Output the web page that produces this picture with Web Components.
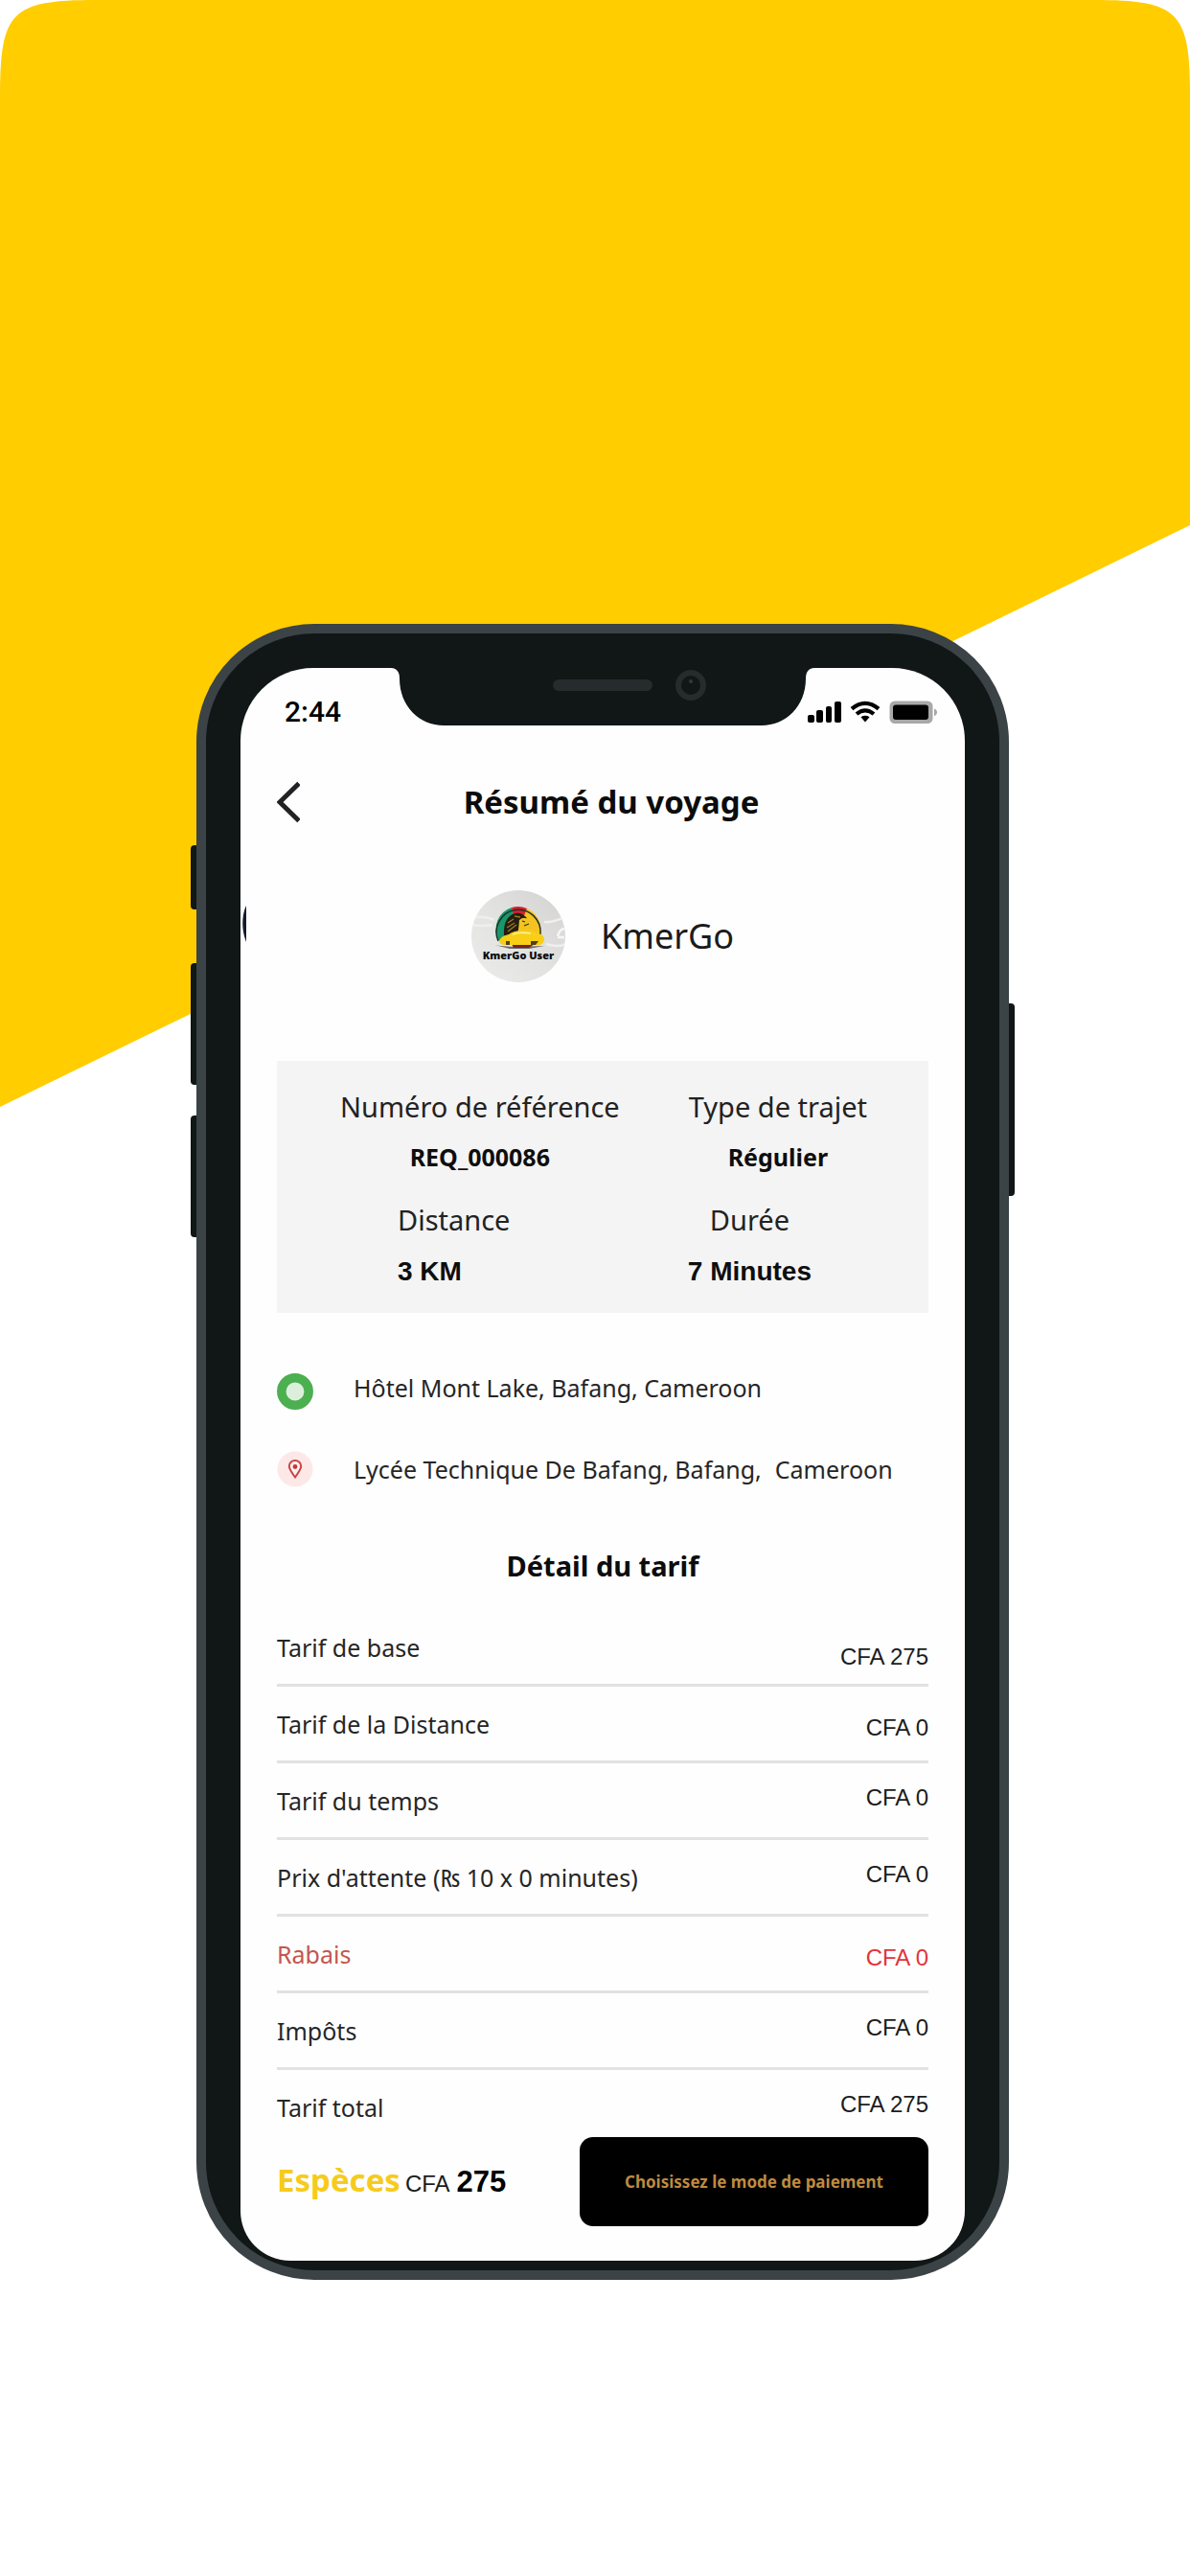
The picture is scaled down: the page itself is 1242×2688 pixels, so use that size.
<!DOCTYPE html>
<html lang="fr">
<head>
<meta charset="utf-8">
<meta name="viewport" content="width=device-width, initial-scale=1">
<title>KmerGo – Résumé du voyage</title>
<style>
  body { margin: 0; background: #fff; color: #161616; font-family: "Noto Sans", sans-serif; }
</style>
</head>
<body>
<promo-stage>
  <phone-frame>
    <status-bar>2:44</status-bar>
    <screen-header>Résumé du voyage</screen-header>
    <driver-profile>KmerGo</driver-profile>
    <trip-facts></trip-facts>
    <trip-route>
      <route-stop kind="start"><span>Hôtel Mont Lake, Bafang, Cameroon</span></route-stop>
      <route-stop kind="end"><span>Lycée Technique De Bafang, Bafang,</span> <span>Cameroon</span></route-stop>
    </trip-route>
    <fare-table>Détail du tarif</fare-table>
    <pay-bar></pay-bar>
  </phone-frame>
</promo-stage>

<script>
function define(name, markup, setup) {
  const template = document.createElement('template');
  template.innerHTML = markup;
  customElements.define(name, class extends HTMLElement {
    constructor() {
      super();
      this.attachShadow({ mode: 'open' }).append(template.content.cloneNode(true));
      if (setup) setup(this.shadowRoot);
    }
  });
}

/* Yellow backdrop with the phone stacked over it in one grid cell */
define('promo-stage', `
<style>
  :host { display: grid; overflow: hidden; }
  .backdrop { grid-area: 1 / 1; width: 100%; display: block; }
  .content { grid-area: 1 / 1; padding: 651px 0 309px 16px; display: flex; justify-content: center; }
</style>
<svg class="backdrop" viewBox="0 0 1242 1156" aria-hidden="true">
  <path fill="#ffcd00" d="M0 100C0 12 12 0 100 0H1142C1230 0 1242 12 1242 100V548L0 1155Z"/>
</svg>
<div class="content"><slot></slot></div>`);

define('phone-frame', `
<style>
  :host { display: block; position: relative; box-sizing: border-box; width: 100%; max-width: 848px;
    border: 10px solid #3b4346; border-radius: 123px; background: #111616; padding: 36px 36px 10px; }
  .screen { position: relative; display: flex; flex-direction: column; background: #fefefe;
    border-radius: 76px 76px 52px 52px; overflow: hidden; padding-bottom: 36px; }
  .key { position: absolute; width: 6px; background: #111616; }
  .left { left: -16px; border-radius: 4px 0 0 4px; }
  .right { right: -16px; border-radius: 0 4px 4px 0; }
  .mute { top: 221px; height: 67px; }
  .up { top: 344px; height: 127px; }
  .down { top: 503px; height: 127px; }
  .power { top: 386px; height: 201px; }
  .edge { position: absolute; left: 2px; top: 248px; }
</style>
<i class="key left mute"></i><i class="key left up"></i><i class="key left down"></i><i class="key right power"></i>
<div class="screen">
  <slot></slot>
  <svg class="edge" width="4" height="38" aria-hidden="true"><path d="M4 0C-1 10 -1 26 4 38Z" fill="#111b2c"/></svg>
</div>`);

define('status-bar', `
<style>
  :host { position: relative; display: flex; align-items: center; justify-content: space-between;
    height: 92px; padding: 0 28px 0 46px; font: 500 30px/36px Roboto, sans-serif; color: #000; }
  .notch { position: absolute; top: 0; left: 50%; margin-left: -221px; }
</style>
<slot></slot>
<svg class="notch" width="442" height="61" viewBox="0 0 442 61" aria-hidden="true">
  <path fill="#111616" d="M0 0H442C436 0 433 4 433 11C433 40 412 60 387 60H55C30 60 9 40 9 11C9 4 6 0 0 0Z"/>
  <rect x="169" y="12" width="104" height="12" rx="6" fill="#262b2e"/>
  <circle cx="313" cy="18" r="13" fill="none" stroke="#262b2e" stroke-width="6"/>
  <circle cx="313" cy="14" r="2" fill="#33383b"/>
</svg>
<svg width="136" height="26" viewBox="0 0 136 26" aria-hidden="true">
  <rect x="0" y="16" width="7" height="8" rx="2"/><rect x="9" y="11" width="7" height="13" rx="2"/>
  <rect x="19" y="7" width="6" height="17" rx="2"/><rect x="28" y="2" width="7" height="22" rx="2"/>
  <g fill="none" stroke="#000" stroke-width="4.2"><path d="M46 9.6Q60 -2 74 9.6"/><path d="M51 15Q60 7.6 69 15"/></g>
  <path d="M55.500 18.200Q60 15.400 64.500 18.200L60 23.600Z"/>
  <rect x="87" y="3" width="42" height="20.500" rx="4" fill="#a8a8a8" stroke="#a8a8a8" stroke-width="3"/>
  <rect x="89" y="5.500" width="37" height="15.500" rx="3"/>
  <path d="M132 9.500Q135 10.500 135 13.200T132 17Z" fill="#a8a8a8"/>
</svg>`);

define('screen-header', `
<style>
  :host { display: flex; align-items: center; height: 96px; padding: 0 44px 0 38px; }
  button { flex: none; display: block; width: 24px; height: 44px; padding: 0; border: 0; background: none; }
  h1 { flex: 1; margin: 0; text-align: center; font-size: 33px; line-height: 40px; font-weight: 700; color: #0c0c0c; }
</style>
<button type="button" aria-label="Retour"><svg width="24" height="44" viewBox="0 0 24 44"><path d="M23 2.500 3 22 23 41.500" fill="none" stroke="#222225" stroke-width="5"/></svg></button>
<h1><slot></slot></h1>`);

define('driver-profile', `
<style>
  :host { display: flex; align-items: center; justify-content: center; gap: 37px; margin-top: 44px;
    font-size: 36px; line-height: 48px; color: #1b1b1b; }
  svg { flex: none; display: block; }
</style>
<svg width="98" height="96" viewBox="0 0 98 96" role="img" aria-label="KmerGo User">
  <defs>
    <linearGradient id="g" x1="0" y1="1" x2="1" y2="0"><stop offset="0" stop-color="#ececeb"/><stop offset=".5" stop-color="#e2e2e1"/><stop offset="1" stop-color="#d3d2d1"/></linearGradient>
    <clipPath id="c"><ellipse cx="49" cy="48" rx="49" ry="48"/></clipPath>
  </defs>
  <g clip-path="url(#c)">
    <rect width="98" height="96" fill="url(#g)"/>
    <path d="M0 29Q12 26 24 31M0 36Q10 38 22 36M76 33Q86 34 98 27M78 56Q90 60 98 56" fill="none" stroke="#efefee" stroke-width="2.500"/>
    <path d="M90 48Q92 40 98 40M90 49H97" fill="none" stroke="#f6f6f6" stroke-width="2.500"/>
    <path d="M28 52A23 24 0 0 1 42 18L49 40 36 54Z" fill="#16976c"/>
    <path d="M42 18A23 24 0 0 1 58 19L56 34H46Z" fill="#d3202f"/>
    <path d="M58 19A23 24 0 0 1 72 46L56 50 52 34Z" fill="#f5c321"/>
    <path d="M28 53A23 23.500 0 1 1 72 46" fill="none" stroke="#203127" stroke-width="1.500"/>
    <path d="M34 47Q33 30 43 25Q51 21 58 29L53 32 48 44 40 47Z" fill="#241d10"/>
    <path d="M38 34l6-4M37 39l8-5M38 43l9-7M45 27l6 1" stroke="#9a7a25" stroke-width="1.400"/>
    <path d="M50 31Q56 26 60 32L61 36 55 39 58 42H49Z" fill="#f2c51e"/>
    <path d="M53 32l3 1M55 37l5-2" stroke="#3b2d0d" stroke-width="1.300"/>
    <path d="M24 57Q36 60 76 58L60 61H40Z" fill="#6d6966"/>
    <path d="M42 56H66L60 60H44Z" fill="#7b211f"/>
    <path d="M29 53Q30 48 39 46Q44 42 53 42Q64 41 69 45Q76 46 76 51Q76 56 71 57H35Q29 57 29 53Z" fill="#f8cf16"/>
    <path d="M43 46Q50 43 62 45" fill="none" stroke="#fff0a0" stroke-width="1.500"/>
    <path d="M36 53h4v4h-4zM62 53h8l-3 4h-5z" fill="#53410f"/>
    <text x="49" y="72" text-anchor="middle" font-family="Noto Sans, sans-serif" font-size="11" font-weight="900" fill="#0c0c0c">KmerGo User</text>
  </g>
</svg>
<slot></slot>`);

define('trip-facts', `
<style>
  :host { display: grid; row-gap: 26px; margin: 82px 38px 0; padding: 28px 0 23px; background: #f4f4f4; }
  dl { display: flex; margin: 0; line-height: 40px; }
  dl > div { display: flex; flex-direction: column; align-items: center; gap: 12px; }
  dt { font-size: 29px; color: #222; }
  dd { margin: 0; font-size: 25px; font-weight: 700; color: #0e0e0e; }
  .ids { justify-content: space-between; padding: 0 64px 0 66px; }
  .amounts { justify-content: space-between; padding: 0 122px 0 126px; }
  .amounts > div { gap: 14px; }
  .amounts > div:first-child { align-items: flex-start; }
  .amounts dd { font: 700 28px/40px "Liberation Sans", sans-serif; }
</style>
<dl class="ids">
  <div><dt>Numéro de référence</dt><dd>REQ_000086</dd></div>
  <div><dt>Type de trajet</dt><dd>Régulier</dd></div>
</dl>
<dl class="amounts">
  <div><dt>Distance</dt><dd>3 KM</dd></div>
  <div><dt>Durée</dt><dd>7 Minutes</dd></div>
</dl>`);

define('trip-route', `
<style>:host { display: flex; flex-direction: column; gap: 43px; margin: 63px 38px 0; }</style>
<slot></slot>`);

define('route-stop', `
<style>
  :host { display: flex; align-items: center; gap: 42px; font-size: 25px; line-height: 30px; color: #262626; }
  :host([kind="start"]) { align-items: flex-start; }
  svg { flex: none; display: none; }
  :host([kind="start"]) .start, :host([kind="end"]) .end { display: block; }
  .text { display: flex; flex-wrap: wrap; column-gap: 14px; }
</style>
<svg class="start" width="38" height="38" aria-hidden="true"><circle cx="19" cy="19" r="14.200" fill="#dcefdc" stroke="#4caf50" stroke-width="9.500"/></svg>
<svg class="end" width="38" height="38" aria-hidden="true"><circle cx="19" cy="19" r="18.500" fill="#fde8e8"/><path d="M19 27.500C15 22 12.800 18.800 12.800 16A6.200 6 0 0 1 25.200 16C25.200 18.800 23 22 19 27.500Z" fill="#fff0f0" stroke="#cc4444" stroke-width="2"/><circle cx="19" cy="16.500" r="2.400" fill="#c23a3a"/></svg>
<div class="text"><slot></slot></div>`);

const fares = [
  ['Tarif de base', 'CFA 275', 'bottom'],
  ['Tarif de la Distance', 'CFA 0', 'middle'],
  ['Tarif du temps', 'CFA 0', 'top'],
  ["Prix d'attente (₨ 10 x 0 minutes)", 'CFA 0', 'top'],
  ['Rabais', 'CFA 0', 'middle', 'discount'],
  ['Impôts', 'CFA 0', 'top'],
  ['Tarif total', 'CFA 275', 'top']
];

define('fare-table', `
<style>
  :host { display: block; margin: 62px 38px 0; }
  h2 { margin: 0 0 26px; text-align: center; font-size: 29px; line-height: 40px; font-weight: 700; color: #0c0c0c; }
  table { width: 100%; border-spacing: 0; }
  th, td { height: 41px; padding: 22px 0 14px; border-bottom: 3px solid #e2e2e2; font-weight: 400; }
  th { text-align: left; vertical-align: top; font-size: 25px; line-height: 34px; color: #262626; }
  td { text-align: right; font-family: "Liberation Sans", sans-serif; font-size: 24px; line-height: 28px; color: #1c1c1c; }
  .top { vertical-align: top; } .middle { vertical-align: middle; } .bottom { vertical-align: bottom; }
  .discount th { color: #c4564f; } .discount td { color: #e3343a; }
  tr:last-child > * { border-bottom: 0; padding-bottom: 7px; }
</style>
<h2><slot></slot></h2>
<table><tbody></tbody></table>`, root => {
  const body = root.querySelector('tbody');
  for (const [label, amount, align, tone] of fares) {
    const row = body.insertRow();
    if (tone) row.className = tone;
    const head = document.createElement('th');
    head.scope = 'row';
    head.textContent = label;
    row.append(head);
    const cell = row.insertCell();
    cell.className = align;
    cell.textContent = amount;
  }
});

define('pay-bar', `
<style>
  :host { display: flex; align-items: center; justify-content: space-between; gap: 24px; margin: 0 38px; }
  p { display: flex; align-items: baseline; gap: 5px; margin: 0; line-height: 40px; font-family: "Liberation Sans", sans-serif; font-size: 24px; color: #1c1c1c; }
  .method { font-family: "Noto Sans", sans-serif; font-size: 33px; font-weight: 700; color: #f6cb1c; }
  strong { font-size: 31px; color: #000; margin-left: 2px; }
  button { flex: 0 1 364px; height: 93px; padding: 0; border: 0; border-radius: 14px; background: #000; color: #bf8a40;
    font: 700 17px/20px "Noto Sans", sans-serif; }
</style>
<p><span class="method">Espèces</span><span>CFA</span><strong>275</strong></p>
<button type="button">Choisissez le mode de paiement</button>`);
</script>
</body>
</html>
